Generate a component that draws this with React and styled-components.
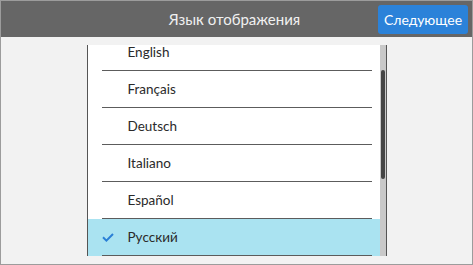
import React, { useLayoutEffect, useRef, useState } from 'react';
import styled, { createGlobalStyle } from 'styled-components';

const GlobalStyle = createGlobalStyle`
  body {
    margin: 0;
    background: #f2f2f2;
    font-family: Lato, "Noto Sans", sans-serif;
  }
`;

const Window = styled.div`
  width: 473px;
  height: 265px;
  box-sizing: border-box;
  border: 1px solid #9c9c9c;
  background: #f2f2f2;
  display: flex;
  flex-direction: column;
`;

const Header = styled.div`
  height: 36px;
  flex-shrink: 0;
  background: #666666;
  display: grid;
  grid-template-columns: 1fr auto 1fr;
  align-items: center;
  padding-right: 4px;
`;

const Title = styled.div`
  grid-column: 2;
  color: #f0f0f0;
  font-size: 15px;
`;

const NextButton = styled.button`
  grid-column: 3;
  justify-self: end;
  width: 90px;
  height: 29px;
  border: none;
  border-radius: 3px;
  background: #2b82d9;
  color: #ffffff;
  font-family: Lato, "Noto Sans", sans-serif;
  font-size: 14px;
  padding: 0;
  cursor: pointer;
`;

const Body = styled.div`
  flex: 1;
  display: flex;
  justify-content: center;
  padding-top: 8px;
`;

const Panel = styled.div`
  width: 300px;
  height: 211px;
  box-sizing: border-box;
  border-left: 1px solid #555;
  border-right: 1px solid #555;
  background: #fff;
  display: flex;
`;

const Viewport = styled.div`
  flex: 1;
  overflow: hidden;
`;

const Track = styled.div`
  width: 6px;
  background: #c9c9c9;
  box-sizing: border-box;
  padding: 0 1px;
`;

const Thumb = styled.div`
  background: #454545;
  border-radius: 2px;
`;

const Row = styled.div`
  background: ${p => (p.$selected ? '#aae3f1' : 'transparent')};
  cursor: pointer;
`;

const RowInner = styled.div`
  height: 37px;
  box-sizing: border-box;
  margin: 0 8px 0 14px;
  border-bottom: 1px solid #5c5c5c;
  display: flex;
  align-items: center;
`;

const CheckSlot = styled.span`
  width: 26px;
  display: flex;
  align-items: center;
`;

const Label = styled.span`
  color: #2a2a2a;
  font-size: 13.5px;
`;

const Check = () => (
  <svg width="12" height="9" viewBox="0 0 12 9">
    <path d="M1 4.3 L4.4 7.6 L11 1" fill="none" stroke="#2a7fd6" strokeWidth="2" />
  </svg>
);

const languages = [
  'Català',
  'English',
  'Français',
  'Deutsch',
  'Italiano',
  'Español',
  'Русский',
  'Português',
  'Polski',
  'Nederlands',
  'Türkçe',
];

const VIEW_HEIGHT = 211;
const SCROLL_TOP = 48;

const App = () => {
  const [selected, setSelected] = useState('Русский');
  const viewRef = useRef(null);

  useLayoutEffect(() => {
    if (viewRef.current) viewRef.current.scrollTop = SCROLL_TOP;
  }, []);

  // scrollbar thumb from content height and scroll offset
  const contentHeight = languages.length * 37;
  const thumbHeight = Math.round((VIEW_HEIGHT * VIEW_HEIGHT) / contentHeight);
  const thumbTop = Math.round(
    (SCROLL_TOP / (contentHeight - VIEW_HEIGHT)) * (VIEW_HEIGHT - thumbHeight)
  );

  return (
    <>
      <GlobalStyle />
      <Window>
        <Header>
          <Title>Язык отображения</Title>
          <NextButton>Следующее</NextButton>
        </Header>
        <Body>
          <Panel>
            <Viewport ref={viewRef}>
              {languages.map(lang => (
                <Row key={lang} $selected={lang === selected} onClick={() => setSelected(lang)}>
                  <RowInner>
                    <CheckSlot>{lang === selected && <Check />}</CheckSlot>
                    <Label>{lang}</Label>
                  </RowInner>
                </Row>
              ))}
            </Viewport>
            <Track>
              <Thumb style={{ marginTop: thumbTop, height: thumbHeight }} />
            </Track>
          </Panel>
        </Body>
      </Window>
    </>
  );
};

export default App;
